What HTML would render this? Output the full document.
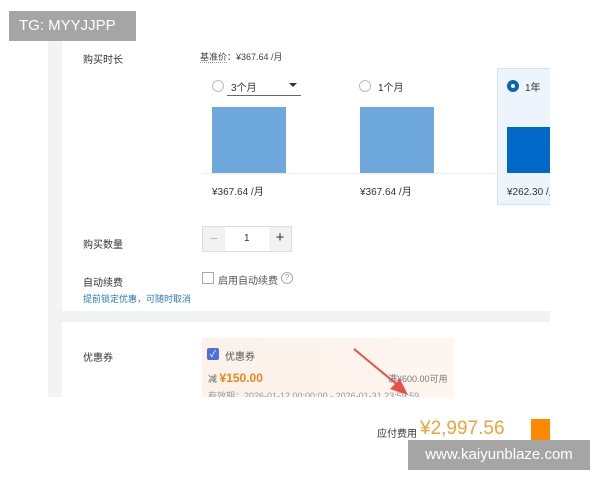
<!DOCTYPE html>
<html><head><meta charset="utf-8"><style>
*{margin:0;padding:0;box-sizing:border-box}
body{width:600px;height:480px;background:#fff;position:relative;overflow:hidden;font-family:"Liberation Sans","Noto Sans CJK SC",sans-serif;color:#333}
.a{position:absolute;white-space:nowrap}
.s{font-size:10px}
.r{width:12px;height:12px;border:1px solid #bbb;border-radius:50%;background:#fff}
#clip{position:absolute;left:0;top:0;width:550px;height:480px;overflow:hidden}
</style></head><body>
<div id="clip">
<div class="a" style="left:48px;top:40px;width:14px;height:357px;background:#f3f3f5"></div>
<div class="a" style="left:48px;top:311px;width:502px;height:11px;background:#f1f2f4"></div>
<div class="a s" style="left:83px;top:51px">购买时长</div>
<div class="a" style="left:200px;top:50px;font-size:9px;color:#444"><span style="border-bottom:1px dotted #999">基准价</span>：¥367.64 /月</div>
<div class="a r" style="left:212px;top:80px"></div>
<div class="a s" style="left:231px;top:79px">3个月</div>
<div class="a" style="left:289px;top:83px;border:4px solid transparent;border-top:4px solid #333"></div>
<div class="a" style="left:227px;top:95px;width:74px;height:1px;background:#666"></div>
<div class="a" style="left:212px;top:107px;width:74px;height:66px;background:#6fa8dc"></div>
<div class="a r" style="left:359px;top:80px"></div>
<div class="a s" style="left:378px;top:79px">1个月</div>
<div class="a" style="left:360px;top:107px;width:74px;height:66px;background:#6fa8dc"></div>
<div class="a" style="left:202px;top:173px;width:348px;height:1px;background:#eee"></div>
<div class="a" style="left:497px;top:68px;width:70px;height:137px;background:#eef4fb;border:1px solid #d6e2ef"></div>
<div class="a" style="left:507px;top:80px;width:12px;height:12px;border-radius:50%;background:#0a64b8;border:3px solid #0a64b8"><div style="width:4px;height:4px;background:#fff;border-radius:50%;margin:1px"></div></div>
<div class="a s" style="left:525px;top:79px">1年</div>
<div class="a" style="left:507px;top:127px;width:60px;height:46px;background:#0068c6"></div>
<div class="a s" style="left:212px;top:183px">¥367.64 /月</div>
<div class="a s" style="left:360px;top:183px">¥367.64 /月</div>
<div class="a s" style="left:507px;top:183px">¥262.30 /月</div>
<div class="a s" style="left:83px;top:236px">购买数量</div>
<div class="a" style="left:202px;top:226px;width:90px;height:26px;border:1px solid #ddd;background:#fff"></div>
<div class="a" style="left:203px;top:227px;width:22px;height:24px;background:#f2f2f2;color:#bbb;text-align:center;line-height:22px;font-size:14px">−</div>
<div class="a" style="left:269px;top:227px;width:22px;height:24px;background:#f2f2f2;color:#333;text-align:center;line-height:22px;font-size:15px">+</div>
<div class="a s" style="left:244px;top:233px">1</div>
<div class="a s" style="left:83px;top:274px">自动续费</div>
<div class="a" style="left:202px;top:272px;width:12px;height:12px;border:1px solid #aaa"></div>
<div class="a s" style="left:218px;top:272px;color:#555">启用自动续费</div>
<div class="a" style="left:281px;top:272px;width:12px;height:12px;border:1px solid #aaa;border-radius:50%;font-size:8px;color:#999;text-align:center;line-height:10px">?</div>
<div class="a" style="left:83px;top:292px;font-size:9px;color:#2a7ab8">提前锁定优惠，可随时取消</div>
<div class="a s" style="left:83px;top:349px">优惠券</div>
<div class="a" style="left:202px;top:338px;width:252px;height:59px;background:linear-gradient(90deg,#fdf1ea,#fdf6f0)"></div>
<div class="a" style="left:207px;top:348px;width:12px;height:12px;background:#4a72d8;border-radius:2px;color:#fff;font-size:9px;text-align:center;line-height:12px">✓</div>
<div class="a s" style="left:225px;top:348px;color:#555">优惠券</div>
<div class="a" style="left:208px;top:371px;font-size:9px;color:#666">减 <b style="font-size:12px;color:#e08a1e">¥150.00</b></div>
<div class="a" style="left:388px;top:372px;font-size:9px;color:#777">满¥600.00可用</div>
<div class="a" style="left:208px;top:389px;font-size:9px;color:#999">有效期：2026-01-12 00:00:00 - 2026-01-31 23:59:59</div>
</div>
<div class="a" style="left:0;top:397px;width:600px;height:83px;background:#fff"></div>
<svg class="a" style="left:350px;top:345px" width="65" height="55"><line x1="4" y1="4" x2="50" y2="42" stroke="#e8504a" stroke-width="2"/><polygon points="58,50 40,44 50,34" fill="#e8504a"/></svg>
<div class="a s" style="left:377px;top:425px">应付费用</div>
<div class="a" style="left:420px;top:418px;font-size:19px;color:#f0a23a">¥2,997.56</div>
<div class="a" style="left:531px;top:419px;width:19px;height:24px;background:#ff8a00"></div>
<div class="a" style="left:9px;top:11px;width:127px;height:30px;background:#a5a5a5;color:#fff;font-size:15px;line-height:30px;padding-left:10px">TG: MYYJJPP</div>
<div class="a" style="left:408px;top:440px;width:182px;height:30px;background:#a5a5a5;color:#fff;font-size:15px;line-height:30px;text-align:center">www.kaiyunblaze.com</div>
</body></html>
